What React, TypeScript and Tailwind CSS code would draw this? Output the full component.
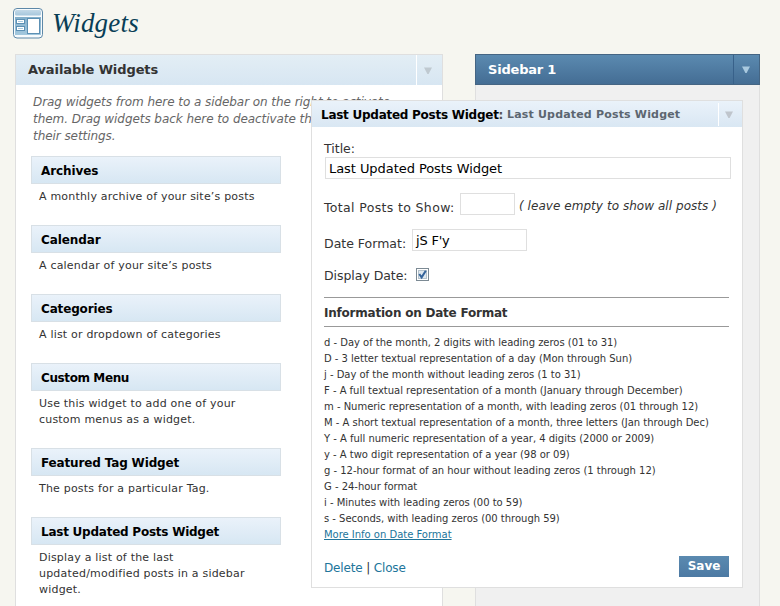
import React from 'react';

const widgets = [
  { name: 'Archives', track: 'tracking-[-0.1px]', lines: ['A monthly archive of your site’s posts'] },
  { name: 'Calendar', track: 'tracking-[-0.1px]', lines: ['A calendar of your site’s posts'] },
  { name: 'Categories', track: 'tracking-[-0.15px]', lines: ['A list or dropdown of categories'] },
  { name: 'Custom Menu', track: 'tracking-[-0.4px]', lines: ['Use this widget to add one of your', 'custom menus as a widget.'] },
  { name: 'Featured Tag Widget', track: 'tracking-[-0.15px]', lines: ['The posts for a particular Tag.'] },
  {
    name: 'Last Updated Posts Widget',
    track: 'tracking-[-0.24px]',
    lines: ['Display a list of the last', 'updated/modified posts in a sidebar', 'widget.'],
  },
];

const formats = [
  'd - Day of the month, 2 digits with leading zeros (01 to 31)',
  'D - 3 letter textual representation of a day (Mon through Sun)',
  'j - Day of the month without leading zeros (1 to 31)',
  'F - A full textual representation of a month (January through December)',
  'm - Numeric representation of a month, with leading zeros (01 through 12)',
  'M - A short textual representation of a month, three letters (Jan through Dec)',
  'Y - A full numeric representation of a year, 4 digits (2000 or 2009)',
  'y - A two digit representation of a year (98 or 09)',
  'g - 12-hour format of an hour without leading zeros (1 through 12)',
  'G - 24-hour format',
  'i - Minutes with leading zeros (00 to 59)',
  's - Seconds, with leading zeros (00 through 59)',
];

function Arrow({ className }: { className: string }) {
  return (
    <svg className={className} width="8" height="7" viewBox="0 0 8 7">
      <path d="M0 0.5h8L4.6 7h-1.2z" fill="currentColor" />
    </svg>
  );
}

function WidgetsIcon() {
  return (
    <svg width="32" height="32" viewBox="0 0 32 32">
      <defs>
        <linearGradient id="bar" x1="0" y1="0" x2="0" y2="1">
          <stop offset="0" stopColor="#c3d9e8" />
          <stop offset="1" stopColor="#a5c6dc" />
        </linearGradient>
        <linearGradient id="body" x1="0" y1="0" x2="0" y2="1">
          <stop offset="0" stopColor="#82aeca" />
          <stop offset="1" stopColor="#a3c8de" />
        </linearGradient>
      </defs>
      <rect x="1.5" y="1.5" width="29" height="29.5" rx="3.5" fill="#f7fbfd" stroke="#5d88a8" />
      <rect x="3" y="3" width="26" height="5.5" rx="1.5" fill="url(#bar)" />
      <rect x="3" y="10" width="26" height="18" fill="url(#body)" />
      <rect x="4.5" y="12.5" width="8" height="4" fill="#fff" stroke="#5c90b4" />
      <rect x="4.5" y="19.5" width="8" height="4" fill="#fff" stroke="#5c90b4" />
      <path d="M6 14.5h5M6 21.5h5" stroke="#a9cbe0" />
      <rect x="15.5" y="11.5" width="12" height="15" fill="#fff" stroke="#5c90b4" />
    </svg>
  );
}

export default function App() {
  return (
    <div className="relative h-[606px] w-[780px] overflow-hidden bg-[#f6f6f0] font-['DejaVu_Sans',Verdana,sans-serif] text-[#333]">
      <header className="flex h-[54px] items-start pt-[7px] pl-3">
        <WidgetsIcon />
        <h1 className="ml-[8px] font-['Liberation_Serif',Georgia,serif] text-[27px] leading-[33px] tracking-[0.2px] italic text-[#093e56]">
          Widgets
        </h1>
      </header>
      <main className="flex items-start">
        <section className="ml-[15px] h-[560px] w-[428px] border border-[#dfdfdf] bg-white">
          <div className="flex h-[30px] items-center bg-linear-to-b from-[#e3eef5] to-[#d7e6f2]">
            <h2 className="ml-3 flex-1 text-[13px] font-bold tracking-[-0.1px]">Available Widgets</h2>
            <div className="flex h-full w-[26px] items-center border-l border-white pl-[7px]">
              <Arrow className="text-[#bfc9d0]" />
            </div>
          </div>
          <div className="pt-[9px] pl-[17px] text-[12px] leading-[17px] tracking-[-0.06px] whitespace-nowrap italic text-[#666]">
            <p>Drag widgets from here to a sidebar on the right to activate</p>
            <p>them. Drag widgets back here to deactivate them and delete</p>
            <p>their settings.</p>
          </div>
          <ul className="mt-[11px] flex w-[265px] flex-col gap-5 pl-[15px]">
            {widgets.map((w) => (
              <li key={w.name}>
                <h3 className="flex h-7 items-center border border-[#d8e0e6] bg-linear-to-b from-[#eaf2fa] to-[#d7e7f3] pt-px pl-[9px] text-[12px] font-bold text-black">
                  <span className={w.track}>{w.name}</span>
                </h3>
                <div className="pt-[5px] pl-2 text-[11px] leading-4 tracking-[0.2px] whitespace-nowrap">
                  {w.lines.map((l) => (
                    <p key={l}>{l}</p>
                  ))}
                </div>
              </li>
            ))}
          </ul>
        </section>
        <section className="ml-8 h-[560px] w-[285px] border-x border-[#dfdfdf] bg-[#f0f0f0]">
          <div className="-mx-px flex h-[31px] items-center border border-[#456583] bg-linear-to-b from-[#5b8ab0] to-[#446d94]">
            <h2 className="ml-3 flex-1 text-[13px] font-bold tracking-[-0.2px] text-white">Sidebar 1</h2>
            <div className="flex h-full w-[26px] items-center border-l border-[#38618a] pl-[8px]">
              <Arrow className="text-[#a9c9df]" />
            </div>
          </div>
        </section>
      </main>

      <div className="absolute top-[100px] left-[311px] h-[488px] w-[432px] border border-[#dfdfdf] bg-white text-[12px]">
        <div className="flex h-[26px] items-center bg-linear-to-b from-[#eaf2fa] to-[#d9e7f3] text-[12px] whitespace-nowrap">
          <h3 className="ml-[9px] w-[186px] pt-px font-bold tracking-[-0.26px] text-black">
            Last Updated Posts Widget<span className="text-[#555]">:</span>
          </h3>
          <span className="flex-1 pt-[3px] text-[11px] font-bold tracking-[0.18px] text-[#5c6670]">
            Last Updated Posts Widget
          </span>
          <div className="flex h-[23px] w-[24px] items-center border-l border-white pl-[6px]">
            <Arrow className="mt-px text-[#bfc5cc]" />
          </div>
        </div>
        <div className="px-3">
          <label className="block h-[30px] pt-[13px] text-[12.5px] leading-[17px]">Title:</label>
          <div className="ml-px flex h-[22px] w-[406px] items-center border border-[#dfdfdf] pt-[2px] pl-[3px] text-[13px] tracking-[-0.06px] text-black">
            Last Updated Posts Widget
          </div>
          <div className="mt-[14px] flex h-[22px]">
            <label className="w-[136px] pt-[6px] text-[12.5px] leading-[17px] tracking-[0.35px] whitespace-nowrap">
              Total Posts to Show:
            </label>
            <div className="h-[22px] w-[55px] border border-[#dfdfdf]" />
            <span className="ml-[4px] pt-[5px] leading-[17px] tracking-[0.05px] whitespace-nowrap italic">
              ( leave empty to show all posts )
            </span>
          </div>
          <div className="mt-[14px] flex h-[22px]">
            <label className="w-[88px] pt-[6px] text-[12.5px] leading-[17px] whitespace-nowrap">Date Format:</label>
            <div className="flex h-[22px] w-[115px] items-center border border-[#dfdfdf] pt-px pl-[3px] text-[13px] tracking-[-0.2px] text-black">
              jS F'y
            </div>
          </div>
          <div className="mt-[15px] flex h-[31px]">
            <label className="w-[92px] pt-px text-[12.5px] leading-[18px] tracking-[-0.05px] whitespace-nowrap">Display Date:</label>
            <svg className="mt-[2px]" width="13" height="13" viewBox="0 0 13 13">
              <rect x=".5" y=".5" width="12" height="12" fill="#fff" stroke="#7c8a94" />
              <rect x="2.5" y="2.5" width="8" height="8" fill="#dfe8ef" stroke="#b4c2cc" />
              <path d="M3.3 6l2.3 3.4L9.8 2.8" fill="none" stroke="#34639a" strokeWidth="2" />
            </svg>
          </div>
          <h4 className="flex h-[30px] w-[405px] items-center border-y border-[#999] pt-[2px] font-bold tracking-[-0.22px]">
            Information on Date Format
          </h4>
          <div className="pt-2 text-[10px] leading-4 tracking-[-0.02px] whitespace-nowrap">
            {formats.map((f) => (
              <p key={f}>{f}</p>
            ))}
            <a className="text-[#21759b] underline">More Info on Date Format</a>
          </div>
          <div className="mt-3 flex w-[405px] items-center justify-between">
            <div className="pt-1 tracking-[-0.15px] whitespace-pre">
              <a className="text-[#21759b]">Delete</a> | <a className="text-[#21759b]">Close</a>
            </div>
            <button className="h-[21px] w-[50px] bg-linear-to-b from-[#5b8ab0] to-[#4c79a3] text-[12px] leading-[21px] font-bold text-white">
              Save
            </button>
          </div>
        </div>
      </div>
    </div>
  );
}
